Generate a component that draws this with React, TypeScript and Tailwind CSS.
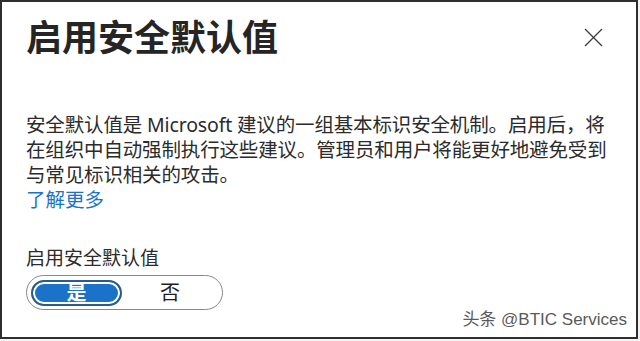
export default function App() {
  return (
    <div className="w-[640px] h-[341px] bg-[#f4f4f4] overflow-hidden" style={{ fontFamily: '"Segoe UI", "Noto Sans", "Noto Sans CJK SC", sans-serif' }}>
      <div className="relative w-[638px] h-[339px] bg-white border-2 border-[#2e2e2e] pl-[24px] pr-[20px]">
        {/* header */}
        <div className="flex items-start justify-between pt-[12px]">
          <h1 className="text-[36px] leading-[42px] font-bold text-[#252525]" style={{ fontFamily: '"Noto Sans CJK SC", sans-serif' }}>
            启用安全默认值
          </h1>
          <button className="mt-[14px] mr-[13px] text-[#3b3b3b]">
            <svg width="19" height="19" viewBox="0 0 19 19" fill="none" stroke="currentColor" strokeWidth="1.3">
              <line x1="1" y1="1" x2="18" y2="18" />
              <line x1="18" y1="1" x2="1" y2="18" />
            </svg>
          </button>
        </div>

        {/* description */}
        <p className="mt-[56px] text-[19.5px] leading-[25px] text-[#2b2b2b] tracking-[-0.15px]">
          安全默认值是 Microsoft 建议的一组基本标识安全机制。启用后，将在组织中自动强制执行这些建议。管理员和用户将能更好地避免受到与常见标识相关的攻击。
        </p>
        <a className="block text-[19.5px] leading-[25px] text-[#1b73c9]">了解更多</a>

        {/* toggle */}
        <div className="mt-[35px] text-[19px] leading-[22px] text-[#2b2b2b]">启用安全默认值</div>
        <div className="mt-[6px] w-[197px] h-[35px] rounded-full border border-[#8a8886] p-[4px] flex items-center">
          <div className="w-[91px] h-[26px] rounded-full bg-[#1a73c9] border-2 border-[#2b5a8c] shadow-[inset_0_0_0_2px_#ffffff] flex items-center justify-center text-white text-[20px] font-bold leading-none">
            是
          </div>
          <div className="flex-1 flex items-center justify-center text-[20px] text-[#1e1e1e] leading-none">否</div>
        </div>

        {/* watermark */}
        <div className="absolute right-[9px] bottom-[7px] text-[17px] leading-[20px] text-[#5a5a5a]" style={{ fontFamily: '"Liberation Sans", "Noto Sans CJK SC", sans-serif' }}>
          头条 @BTIC Services
        </div>
      </div>
    </div>
  );
}
